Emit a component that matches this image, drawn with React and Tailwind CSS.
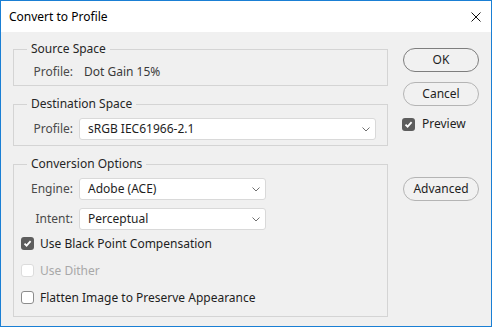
import React from 'react';

const Chevron = () => (
  <svg width="8" height="5" viewBox="0 0 8 5" className="shrink-0">
    <polyline points="0.5,0.5 4,4 7.5,0.5" fill="none" stroke="#6f6f6f" strokeWidth="1" />
  </svg>
);

const Select = ({ value, width }) => (
  <div
    className={`${width} h-[22px] ml-[6px] bg-white border border-[#d9d9d9] rounded-[3px] flex items-center justify-between pl-[8px] pr-[5px] text-[#1e1e1e]`}
  >
    <span>{value}</span>
    <Chevron />
  </div>
);

const Check = ({ checked, disabled }) => {
  if (checked) {
    return (
      <div className="w-[13px] h-[13px] rounded-[3px] bg-[#5d5d5d] flex items-center justify-center shrink-0">
        <svg width="9" height="9" viewBox="0 0 9 9">
          <polyline points="1.5,4.6 3.6,6.7 7.6,2.2" fill="none" stroke="#fff" strokeWidth="1.8" />
        </svg>
      </div>
    );
  }
  return (
    <div
      className={`w-[13px] h-[13px] rounded-[3px] bg-white border shrink-0 ${
        disabled ? 'border-[#dcdcdc]' : 'border-[#8c8c8c]'
      }`}
    />
  );
};

const Group = ({ title, children }) => (
  <fieldset className="m-0 p-0 min-w-0 border border-[#d4d4d4]">
    <legend className="ml-[13px] px-[4px] h-[16px] leading-[16px] text-[#262626]">{title}</legend>
    {children}
  </fieldset>
);

const Label = ({ children }) => (
  <div className="w-[59px] text-right text-[#4a4a4a] shrink-0">{children}</div>
);

const Button = ({ children, isDefault }) => (
  <div
    className={`w-[76px] h-[24px] rounded-full bg-[#f1f1f1] border flex items-center justify-center text-[#1e1e1e] ${
      isDefault ? 'border-[#7e7e7e]' : 'border-[#b4b4b4]'
    }`}
  >
    {children}
  </div>
);

export default function App() {
  return (
    <div className="w-[492px] h-[327px] border border-[#1a7fd4] bg-[#f0f0f0] flex flex-col font-['Noto_Sans',sans-serif] text-[12px] leading-[16px] overflow-hidden">
      <div className="h-[31px] bg-white flex items-center justify-between pl-[8px] pr-[10px] shrink-0">
        <span className="text-black">Convert to Profile</span>
        <svg width="10" height="10" viewBox="0 0 10 10">
          <path d="M0.5 0.5 L9.5 9.5 M9.5 0.5 L0.5 9.5" stroke="#111" strokeWidth="1" />
        </svg>
      </div>

      <div className="flex-1 flex pl-[12px]">
        <div className="w-[375px] flex flex-col pt-[9px]">
          <Group title="Source Space">
            <div className="flex items-center h-[16px] mt-[7px] mb-[5px]">
              <Label>Profile:</Label>
              <span className="ml-[11px] text-[#3a3a3a]">Dot Gain 15%</span>
            </div>
          </Group>

          <div className="mt-[10px]">
            <Group title="Destination Space">
              <div className="flex items-center mt-[6px] mb-[5px]">
                <Label>Profile:</Label>
                <Select value="sRGB IEC61966-2.1" width="w-[297px]" />
              </div>
            </Group>
          </div>

          <div className="mt-[10px]">
            <Group title="Conversion Options">
              <div className="flex flex-col mt-[6px] mb-[5px]">
                <div className="flex items-center">
                  <Label>Engine:</Label>
                  <Select value="Adobe (ACE)" width="w-[187px]" />
                </div>
                <div className="flex items-center mt-[8px]">
                  <Label>Intent:</Label>
                  <Select value="Perceptual" width="w-[187px]" />
                </div>
                <div className="flex items-center h-[27px] pl-[7px] gap-[6px]">
                  <Check checked />
                  <span className="text-[#1e1e1e]">Use Black Point Compensation</span>
                </div>
                <div className="flex items-center h-[27px] pl-[7px] gap-[6px]">
                  <Check disabled />
                  <span className="text-[#a8a8a8]">Use Dither</span>
                </div>
                <div className="flex items-center h-[27px] pl-[7px] gap-[6px]">
                  <Check />
                  <span className="text-[#1e1e1e]">Flatten Image to Preserve Appearance</span>
                </div>
              </div>
            </Group>
          </div>
        </div>

        <div className="ml-[15px] w-[76px] flex flex-col pt-[16px]">
          <Button isDefault>OK</Button>
          <div className="mt-[10px]">
            <Button>Cancel</Button>
          </div>
          <div className="flex items-center h-[16px] mt-[10px] gap-[7px] -ml-[1px]">
            <Check checked />
            <span className="text-[#1e1e1e]">Preview</span>
          </div>
          <div className="mt-[45px]">
            <Button>Advanced</Button>
          </div>
        </div>
      </div>
    </div>
  );
}
